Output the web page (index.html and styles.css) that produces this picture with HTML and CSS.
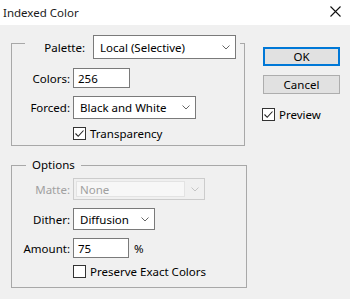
FILE: index.html
```html
<!DOCTYPE html>
<html>
<head>
<meta charset="utf-8">
<link rel="stylesheet" href="styles.css">
</head>
<body>
<div class="titlebar">
  <span class="title">Indexed Color</span>
  <svg class="close" width="11" height="11" viewBox="0 0 11 11"><path d="M0.5 0.5 L10.5 10.5 M10.5 0.5 L0.5 10.5" stroke="#111" stroke-width="1.1" fill="none"/></svg>
</div>
<div class="content">
  <div class="leftcol">
    <div class="group group1">
      <div class="legend-row">
        <span class="legend-label">Palette:</span>
        <div class="select sel-palette"><span>Local (Selective)</span><svg class="chev" width="8" height="5" viewBox="0 0 8 5"><path d="M0.5 0.5 L4 4 L7.5 0.5" stroke="#666" fill="none"/></svg></div>
      </div>
      <div class="row row-colors">
        <span class="label">Colors:</span>
        <div class="input inp-colors">256</div>
      </div>
      <div class="row row-forced">
        <span class="label">Forced:</span>
        <div class="select sel-forced"><span>Black and White</span><svg class="chev" width="8" height="5" viewBox="0 0 8 5"><path d="M0.5 0.5 L4 4 L7.5 0.5" stroke="#666" fill="none"/></svg></div>
      </div>
      <div class="row row-check1">
        <span class="label"></span>
        <span class="checkbox"><svg width="11" height="11" viewBox="0 0 11 11"><path d="M1.5 5.5 L4.2 8.3 L9.5 2.5" stroke="#222" stroke-width="1.1" fill="none"/></svg></span>
        <span class="cbtext">Transparency</span>
      </div>
    </div>
    <div class="group group2">
      <div class="legend2">Options</div>
      <div class="row row-matte">
        <span class="label disabled">Matte:</span>
        <div class="select sel-matte disabled-sel"><span class="combo-inner">None</span><svg class="chev" width="8" height="5" viewBox="0 0 8 5"><path d="M0.5 0.5 L4 4 L7.5 0.5" stroke="#c4c4c4" fill="none"/></svg></div>
      </div>
      <div class="row row-dither">
        <span class="label">Dither:</span>
        <div class="select sel-dither"><span>Diffusion</span><svg class="chev" width="8" height="5" viewBox="0 0 8 5"><path d="M0.5 0.5 L4 4 L7.5 0.5" stroke="#666" fill="none"/></svg></div>
      </div>
      <div class="row row-amount">
        <span class="label">Amount:</span>
        <div class="input inp-amount">75</div>
        <span class="pct">%</span>
      </div>
      <div class="row row-check2">
        <span class="label"></span>
        <span class="checkbox"></span>
        <span class="cbtext">Preserve Exact Colors</span>
      </div>
    </div>
  </div>
  <div class="rightcol">
    <div class="button btn-ok">OK</div>
    <div class="button btn-cancel">Cancel</div>
    <div class="preview">
      <span class="checkbox"><svg width="11" height="11" viewBox="0 0 11 11"><path d="M1.5 5.5 L4.2 8.3 L9.5 2.5" stroke="#222" stroke-width="1.1" fill="none"/></svg></span>
      <span class="cbtext">Preview</span>
    </div>
  </div>
</div>
</body>
</html>
```
FILE: styles.css
```css
html, body {
  margin: 0;
  padding: 0;
}
body {
  width: 350px;
  height: 299px;
  background: #f0f0f0;
  font-family: "Noto Sans", "Open Sans", sans-serif;
  font-size: 11.5px;
  color: #000;
  overflow: hidden;
}
.titlebar {
  height: 25px;
  background: #fff;
  display: flex;
  align-items: center;
  justify-content: space-between;
  padding: 0 9px 0 3px;
}
.title {
  font-size: 11.5px;
  color: #1a1a1a;
  margin-top: -1px;
}
.close {
  margin-top: -2px;
}
.content {
  display: flex;
  padding-left: 11px;
}
.leftcol {
  width: 234px;
}
.group {
  border: 1px solid #a8a8a8;
  display: flex;
  flex-direction: column;
}
.group1 {
  margin-top: 18px;
  padding-bottom: 5px;
}
.group2 {
  margin-top: 19px;
  width: 234px;
  padding-bottom: 9px;
}
.legend-row {
  margin-top: -9px;
  margin-left: 13px;
  width: 211px;
  padding-right: 4px;
  background: #f0f0f0;
  display: flex;
  align-items: center;
  justify-content: flex-end;
}
.legend-label {
  margin-right: 8px;
}
.legend2 {
  align-self: flex-start;
  margin-top: -9px;
  margin-left: 14px;
  padding: 0 6px;
  height: 16px;
  line-height: 16px;
  background: #f0f0f0;
}
.row {
  display: flex;
  align-items: center;
}
.label {
  width: 58px;
  text-align: right;
  margin-right: 3px;
  flex: none;
}
.label.disabled {
  color: #a0a0a0;
}
.select {
  box-sizing: border-box;
  height: 23px;
  border: 1px solid #7a7a7a;
  background: #fff;
  display: flex;
  align-items: center;
  justify-content: space-between;
  padding: 0 5px 0 6px;
}
.chev {
  flex: none;
}
.sel-palette { width: 143px; height: 24px; }
.sel-forced { width: 123px; }
.sel-matte { width: 132px; height: 22px; }
.sel-dither { width: 82px; height: 22px; }
.disabled-sel {
  border-color: #cccccc;
  background: #f0f0f0;
  padding: 2px 5px 2px 2px;
  color: #a0a0a0;
}
.combo-inner {
  box-sizing: border-box;
  width: 109px;
  height: 100%;
  border: 1px solid #e3e3e3;
  background: #f7f7f7;
  display: flex;
  align-items: center;
  padding-left: 3px;
}
.input {
  box-sizing: border-box;
  height: 20px;
  border: 1px solid #7a7a7a;
  background: #fff;
  display: flex;
  align-items: center;
  padding-left: 4px;
}
.inp-colors { width: 57px; }
.inp-amount { width: 56px; }
.pct {
  margin-left: 5px;
}
.row-colors { margin-top: 9px; }
.row-forced { margin-top: 8px; }
.row-check1 { margin-top: 8px; height: 13px; }
.row-matte { margin-top: 5px; }
.row-dither { margin-top: 8px; }
.row-amount { margin-top: 8px; }
.row-check2 { margin-top: 7px; height: 13px; }
.checkbox {
  box-sizing: border-box;
  width: 13px;
  height: 13px;
  border: 1px solid #333;
  background: #fff;
  display: flex;
  align-items: center;
  justify-content: center;
  flex: none;
}
.cbtext {
  margin-left: 4px;
}
.rightcol {
  margin-left: 18px;
  width: 77px;
  display: flex;
  flex-direction: column;
}
.button {
  box-sizing: border-box;
  height: 19px;
  border: 1px solid #adadad;
  background: #e1e1e1;
  display: flex;
  align-items: center;
  justify-content: center;
}
.btn-ok {
  margin-top: 22px;
  border: 2px solid #0078d7;
}
.btn-cancel {
  margin-top: 9px;
}
.preview {
  margin-top: 14px;
  margin-left: -1px;
  display: flex;
  align-items: center;
  height: 13px;
}
```
